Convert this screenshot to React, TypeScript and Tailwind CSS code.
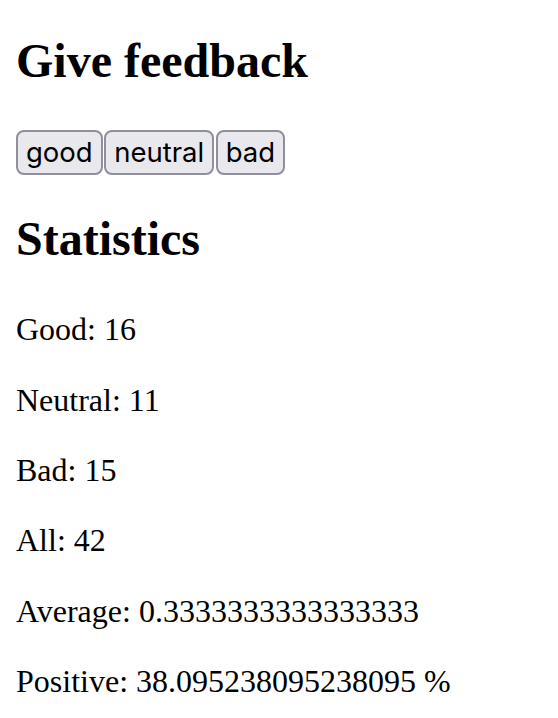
import React from "react";

export default function App() {
  const btn =
    "bg-[#e9e9ed] border-2 border-[#8f8f9d] rounded-[8px] px-[8px] py-[2px] text-[27.5px] leading-[37px] text-black font-['Inter',sans-serif]";
  return (
    <div className="m-4 font-['Liberation_Serif',serif] text-[32px] leading-[38.4px] text-black">
      <h1 className="text-[48px] leading-[57.6px] font-bold my-[32px]">Give feedback</h1>
      <div className="flex gap-[1.5px] pt-[8px]">
        <button className={btn}>good</button>
        <button className={btn}>neutral</button>
        <button className={btn}>bad</button>
      </div>
      <h1 className="text-[48px] leading-[57.6px] font-bold mt-[35px] mb-[43px]">Statistics</h1>
      <p className="my-8">Good: 16</p>
      <p className="my-8">Neutral: 11</p>
      <p className="my-8">Bad: 15</p>
      <p className="my-8">All: 42</p>
      <p className="my-8">Average: 0.3333333333333333</p>
      <p className="my-8">Positive: 38.095238095238095 %</p>
    </div>
  );
}
